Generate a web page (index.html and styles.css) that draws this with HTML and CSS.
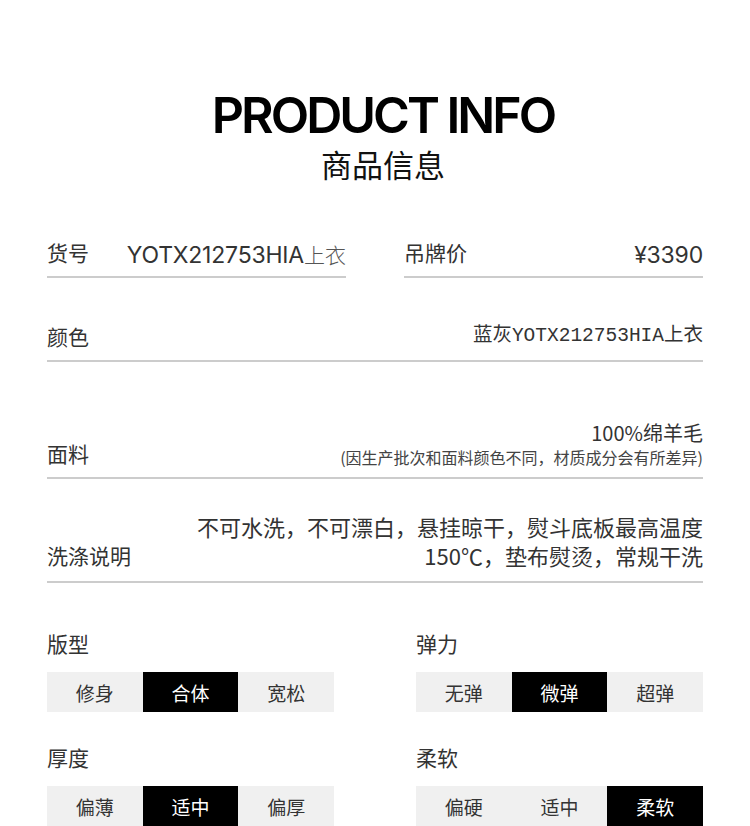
FILE: index.html
```html
<!DOCTYPE html>
<html lang="zh-CN">
<head>
    <meta charset="UTF-8">
    <meta name="viewport" content="width=device-width, initial-scale=1.0">
    <title>Product Info</title>
    <link rel="stylesheet" href="styles.css">
</head>
<body>
    <div class="page">
        <!-- Heading -->
        <header class="head">
            <h1 class="title-en">PRODUCT INFO</h1>
            <h2 class="title-cn">商品信息</h2>
        </header>

        <!-- Basic info rows -->
        <section class="info">
            <div class="row-split">
                <div class="cell">
                    <span class="label">货号</span>
                    <span class="value-latin">YOTX212753HIA<span class="thin">上衣</span></span>
                </div>
                <div class="cell">
                    <span class="label">吊牌价</span>
                    <span class="value-latin">¥3390</span>
                </div>
            </div>

            <div class="row row-color">
                <span class="label">颜色</span>
                <span class="value value-mono">蓝灰YOTX212753HIA上衣</span>
            </div>

            <div class="row row-fabric">
                <span class="label">面料</span>
                <div class="value-stack">
                    <span class="value">100%绵羊毛</span>
                    <span class="note">(因生产批次和面料颜色不同，材质成分会有所差异)</span>
                </div>
            </div>

            <div class="row row-wash">
                <span class="label">洗涤说明</span>
                <span class="value value-wrap">不可水洗，不可漂白，悬挂晾干，熨斗底板最高温度<br>150℃，垫布熨烫，常规干洗</span>
            </div>
        </section>

        <!-- Feel / fit selectors -->
        <section class="traits">
            <div class="trait">
                <div class="trait-label">版型</div>
                <div class="seg">
                    <span class="seg-item">修身</span>
                    <span class="seg-item active">合体</span>
                    <span class="seg-item">宽松</span>
                </div>
            </div>
            <div class="trait">
                <div class="trait-label">弹力</div>
                <div class="seg">
                    <span class="seg-item">无弹</span>
                    <span class="seg-item active">微弹</span>
                    <span class="seg-item">超弹</span>
                </div>
            </div>
            <div class="trait">
                <div class="trait-label">厚度</div>
                <div class="seg">
                    <span class="seg-item">偏薄</span>
                    <span class="seg-item active">适中</span>
                    <span class="seg-item">偏厚</span>
                </div>
            </div>
            <div class="trait">
                <div class="trait-label">柔软</div>
                <div class="seg">
                    <span class="seg-item">偏硬</span>
                    <span class="seg-item">适中</span>
                    <span class="seg-item active">柔软</span>
                </div>
            </div>
        </section>
    </div>
</body>
</html>
```

FILE: styles.css
```css
/* Global */
body {
    margin: 0;
    background: #fff;
    color: #333;
    font-family: "Noto Sans CJK SC", "Noto Sans", sans-serif;
}

.page {
    padding: 0 47px;
}

/* Heading */
.head {
    text-align: center;
    padding-top: 90px;
    padding-left: 16px;
}

.title-en {
    margin: 0;
    font-family: Inter, "Noto Sans", sans-serif;
    font-size: 50px;
    font-weight: 600;
    line-height: 50px;
    letter-spacing: -3px;
    color: #000;
}

.title-cn {
    margin: 7px 0 0;
    font-size: 31px;
    font-weight: 400;
    line-height: 34px;
    color: #111;
}

/* Info rows */
.info {
    margin-top: 56px;
}

.label {
    font-size: 21px;
    line-height: 30px;
    white-space: nowrap;
}

.row-split {
    display: flex;
    justify-content: space-between;
}

.cell {
    width: 299px;
    display: flex;
    justify-content: space-between;
    align-items: flex-end;
    padding-bottom: 6px;
    border-bottom: 2px solid #ccc;
}

.cell .label {
    padding-bottom: 3px;
}

.value-latin {
    font-family: Inter, "Noto Sans", sans-serif;
    font-size: 23px;
    line-height: 30px;
    letter-spacing: -0.2px;
    color: #333;
}

.thin {
    font-family: "Noto Sans CJK SC", sans-serif;
    font-size: 21px;
    font-weight: 300;
    letter-spacing: 0;
    color: #555;
}

.row {
    display: flex;
    justify-content: space-between;
    align-items: flex-end;
    padding-bottom: 9px;
    border-bottom: 2px solid #ccc;
}

.value {
    font-size: 20px;
    line-height: 30px;
    text-align: right;
}

.value-mono {
    font-family: "Liberation Mono", "Noto Sans CJK SC", monospace;
    font-size: 19.5px;
}

.row-color {
    margin-top: 43px;
}

.row-fabric {
    margin-top: 58px;
}

.value-stack {
    display: flex;
    flex-direction: column;
    align-items: flex-end;
}

.value-stack .value {
    line-height: 26px;
}

.note {
    font-size: 16px;
    line-height: 22px;
    color: #444;
}

.row-wash {
    margin-top: 33px;
    padding-bottom: 11px;
}

.value-wrap {
    font-size: 22px;
    line-height: 29px;
}

/* Traits */
.traits {
    display: grid;
    grid-template-columns: 287px 287px;
    column-gap: 82px;
    row-gap: 31px;
    margin-top: 46px;
}

.trait-label {
    font-size: 21px;
    line-height: 28px;
    margin-bottom: 15px;
}

.seg {
    display: grid;
    grid-template-columns: repeat(3, 1fr);
    background: #f0f0f0;
}

.seg-item {
    height: 40px;
    display: flex;
    align-items: center;
    justify-content: center;
    font-size: 19px;
    color: #333;
}

.seg-item.active {
    background: #000;
    color: #fff;
}
```
